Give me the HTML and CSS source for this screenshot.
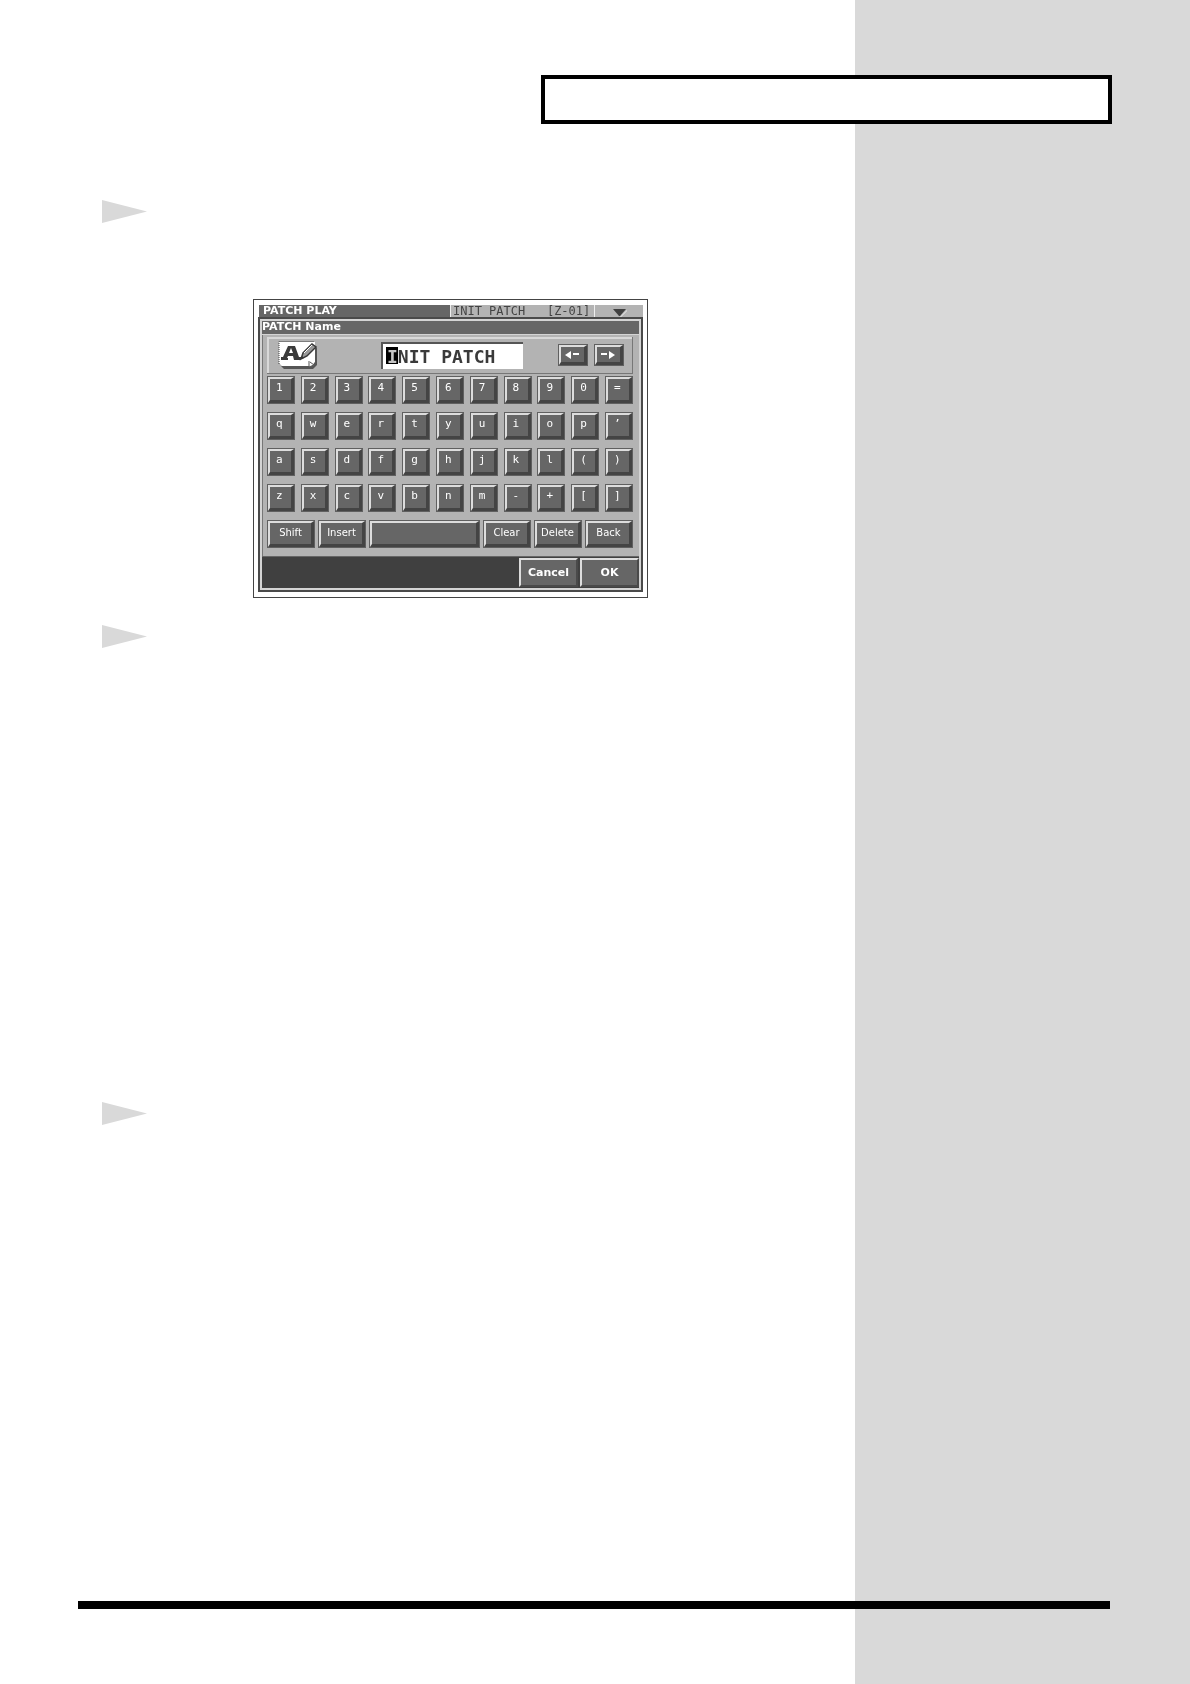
FILE: index.html
```html
<!DOCTYPE html>
<html lang="en">
<head>
<meta charset="utf-8">
<title>PATCH Name</title>
<link rel="stylesheet" href="styles.css">
</head>
<body>
<div class="page">
  <header class="chapter"></header>
  <main class="steps">
    <section class="step step-name">
      <svg class="marker" viewBox="0 0 45 23" aria-hidden="true"><path d="M0 0L45 11.500L0 23Z"/></svg>
      <div class="screen">
        <div class="titlebar">
          <span class="title">PATCH PLAY</span>
          <span class="patch">INIT PATCH   [Z-01]</span>
          <button class="menu" aria-label="Menu"><svg viewBox="0 0 14 8"><path d="M14 1L7 8L8 8L14 2Z" fill="#eee"/><path d="M0 0H13L7 7H6Z" fill="#404040"/></svg></button>
        </div>
        <form class="window">
          <h1 class="caption">PATCH Name</h1>
          <div class="body">
            <div class="entry">
              <svg class="icon" viewBox="0 0 39 28" aria-hidden="true">
                <path d="M3 25H34L36 23V4L39 7V24L35 28H6Z" fill="#555"/>
                <path d="M1 1H37V21L33 25H4L1 22Z" fill="#fff"/>
                <path d="M1 23V.5H36" fill="none" stroke="#444" stroke-dasharray="1 1"/>
                <path d="M3 18V16H5L10 5H17L21 16H23V19H16L15 15H10L9 17H10V19H3ZM11 12H15L13 7Z" fill="#3a3a3a" fill-rule="evenodd"/>
                <path d="M23 18L25 12L34 3L38 6L29 15Z" fill="#999" stroke="#3a3a3a" stroke-width="1.500"/>
                <path d="M26 12L34 4" stroke="#fff"/><path d="M23 18L24 15L26 17Z" fill="#333"/>
                <path d="M31 20V26L36 24L32 21" fill="#fff" stroke="#555"/>
              </svg>
              <div class="field">
                <input class="name" type="text" value="INIT PATCH" aria-label="Patch name">
                <span class="cursor"></span>
              </div>
              <div class="arrows">
                <button type="button" class="key arrow" aria-label="Cursor left"><svg viewBox="0 0 14 8"><path d="M0 4L6 0V8ZM8 2H14V4H8Z" fill="#fff"/></svg></button>
                <button type="button" class="key arrow" aria-label="Cursor right"><svg viewBox="0 0 14 8"><path d="M14 4L8 0V8ZM0 2H6V4H0Z" fill="#fff"/></svg></button>
              </div>
            </div>
            <div class="keys">
              <button type="button" class="key">1</button><button type="button" class="key">2</button><button type="button" class="key">3</button><button type="button" class="key">4</button><button type="button" class="key">5</button><button type="button" class="key">6</button><button type="button" class="key">7</button><button type="button" class="key">8</button><button type="button" class="key">9</button><button type="button" class="key">0</button><button type="button" class="key">=</button>
              <button type="button" class="key">q</button><button type="button" class="key">w</button><button type="button" class="key">e</button><button type="button" class="key">r</button><button type="button" class="key">t</button><button type="button" class="key">y</button><button type="button" class="key">u</button><button type="button" class="key">i</button><button type="button" class="key">o</button><button type="button" class="key">p</button><button type="button" class="key">’</button>
              <button type="button" class="key">a</button><button type="button" class="key">s</button><button type="button" class="key">d</button><button type="button" class="key">f</button><button type="button" class="key">g</button><button type="button" class="key">h</button><button type="button" class="key">j</button><button type="button" class="key">k</button><button type="button" class="key">l</button><button type="button" class="key">(</button><button type="button" class="key">)</button>
              <button type="button" class="key">z</button><button type="button" class="key">x</button><button type="button" class="key">c</button><button type="button" class="key">v</button><button type="button" class="key">b</button><button type="button" class="key">n</button><button type="button" class="key">m</button><button type="button" class="key">-</button><button type="button" class="key">+</button><button type="button" class="key">[</button><button type="button" class="key">]</button>
            </div>
            <div class="commands">
              <button type="button" class="key wide">Shift</button>
              <button type="button" class="key wide">Insert</button>
              <button type="button" class="key wide space" aria-label="Space"></button>
              <button type="button" class="key wide">Clear</button>
              <button type="button" class="key wide">Delete</button>
              <button type="button" class="key wide">Back</button>
            </div>
          </div>
          <div class="footer">
            <button type="button" class="action">Cancel</button>
            <button type="button" class="action">OK</button>
          </div>
        </form>
      </div>
    </section>
    <section class="step step-edit">
      <svg class="marker" viewBox="0 0 45 23" aria-hidden="true"><path d="M0 0L45 11.500L0 23Z"/></svg>
    </section>
    <section class="step step-done">
      <svg class="marker" viewBox="0 0 45 23" aria-hidden="true"><path d="M0 0L45 11.500L0 23Z"/></svg>
    </section>
  </main>
  <hr class="rule">
</div>
</body>
</html>
```
FILE: styles.css
```css
* { box-sizing: border-box; }

body { margin: 0; background: #fff; }

.page {
  display: flex;
  flex-direction: column;
  min-height: 100vh;
  padding: 75px 78px;
  background: linear-gradient(#d9d9d9, #d9d9d9) right / 335px 100% no-repeat;
}

.chapter {
  align-self: flex-end;
  width: 100%;
  max-width: 571px;
  height: 49px;
  border: 4px solid #000;
  background: #fff;
}

.steps { flex: 1; padding: 76px 0 0 24px; }
.step-name { padding-bottom: 27px; }
.step-edit { min-height: 477px; }
.marker { display: block; width: 45px; height: 23px; fill: #d9d9d9; }

.rule {
  width: calc(100% - 2px);
  height: 8px;
  margin: 0;
  border: 0;
  background: #000;
}

/* Instrument display */
.screen {
  width: 395px;
  margin: 76px 0 0 151px;
  padding: 5px 4px;
  border: 1px solid #444;
  background: #fff;
  font-family: "DejaVu Sans", sans-serif;
  color: #fff;
}

.titlebar {
  display: flex;
  height: 12px;
  margin-left: 1px;
  background: #b3b3b3;
  line-height: 12px;
}
.title { flex: 1; padding-left: 4px; background: #666; font-size: 11px; font-weight: bold; }
.patch {
  width: 144px;
  padding-left: 2px;
  border-left: 1px solid #eee;
  color: #444;
  font-family: "DejaVu Sans Mono", monospace;
  font-size: 12px;
  white-space: pre;
}
.menu {
  width: 49px;
  padding: 4px 0 0 18px;
  border: 0;
  border-left: 1px solid #eee;
  background: #b3b3b3;
}
.menu svg { display: block; width: 14px; height: 8px; }

.window {
  border: 2px solid #4a4a4a;
  padding: 2px;
  background: #d4d4d4;
}
.caption {
  height: 13px;
  margin: 0 0 1px;
  background: #666;
  font-size: 11px;
  line-height: 12px;
}
.body { padding: 2px 6px 8px 4px; border-left: 1px solid #777; background: #b3b3b3; }

.entry {
  display: flex;
  align-items: center;
  height: 37px;
  padding: 0 8px 0 11px;
  border: 1px solid #777;
  border-width: 0 1px 1px 0;
  box-shadow: inset 2px 2px #d8d8d8;
}
.icon { width: 39px; height: 28px; }
.field {
  position: relative;
  margin: 0 auto 0 64px;
}
.name {
  display: block;
  width: 142px;
  height: 27px;
  padding: 0 0 0 4px;
  border: 2px solid #555;
  border-width: 2px 0 0 2px;
  background: #fff;
  color: #3a3a3a;
  font: bold 18px/24px "DejaVu Sans Mono", monospace;
}
.cursor {
  position: absolute;
  top: 5px;
  left: 5px;
  width: 12px;
  height: 17px;
  background: #fff;
  mix-blend-mode: difference;
}
.arrows { display: flex; gap: 6px; }

.key {
  width: 26px;
  height: 26px;
  margin: 1px;
  padding: 0 0 3px 6px;
  border: solid;
  border-width: 2px 3px 3px 2px;
  border-color: #ddd #444 #444 #ddd;
  background: #666;
  box-shadow: 0 0 0 1px #606060;
  color: #fff;
  font: 11px/14px "DejaVu Sans Mono", monospace;
  text-align: left;
}
.arrow { width: 28px; height: 20px; padding: 0 0 0 4px; }
.arrow svg { display: block; width: 14px; height: 8px; }

.keys {
  display: grid;
  grid-template-columns: repeat(11, 28px);
  justify-content: space-between;
  row-gap: 8px;
  margin: 2px 0 8px;
}
.commands { display: flex; gap: 3px; }
.wide {
  width: 46px;
  padding: 0 0 1px;
  font: 10px/14px "DejaVu Sans", sans-serif;
  text-align: center;
}
.space { flex: 1; }

.footer {
  display: flex;
  justify-content: flex-end;
  gap: 2px;
  height: 32px;
  padding: 1px 0;
  border-top: 1px solid #666;
  background: #404040;
}
.action {
  width: 59px;
  padding: 0;
  border: 2px solid;
  border-color: #ddd #4a4a4a #4a4a4a #ddd;
  background: #666;
  color: #fff;
  font: bold 11px/14px "DejaVu Sans", sans-serif;
}
```
